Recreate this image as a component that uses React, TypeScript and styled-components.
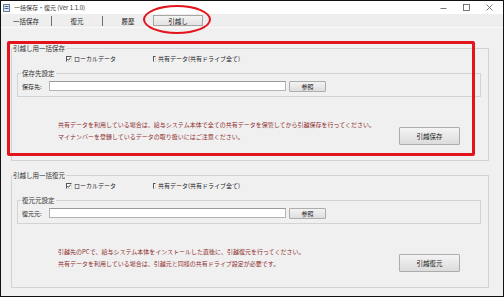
import React from 'react';
import styled, { createGlobalStyle } from 'styled-components';

// -- global --
const GlobalStyle = createGlobalStyle`
  html, body {
    margin: 0;
    padding: 0;
    background: #ffffff;
  }
  body {
    font-family: "Noto Sans CJK JP", "Noto Sans", sans-serif;
    font-size: 6px;
    color: #222222;
  }
  * {
    box-sizing: border-box;
  }
`;

// -- small drawings --
const AppIcon: React.FC = () => (
  <svg width="7" height="8" viewBox="0 0 7 8">
    <rect x="0.5" y="0.5" width="6" height="7" fill="#dfe6ee" stroke="#6b7f99" />
    <rect x="1.5" y="2" width="4" height="1" fill="#3d6fb0" />
    <rect x="1.5" y="4" width="4" height="1" fill="#3d6fb0" />
  </svg>
);

const MinimizeIcon: React.FC = () => (
  <svg width="7" height="7" viewBox="0 0 7 7">
    <line x1="0.5" y1="4.5" x2="6.5" y2="4.5" stroke="#555" strokeWidth="0.8" />
  </svg>
);

const MaximizeIcon: React.FC = () => (
  <svg width="7" height="7" viewBox="0 0 7 7">
    <rect x="0.5" y="0.5" width="6" height="6" fill="none" stroke="#555" strokeWidth="0.8" />
  </svg>
);

const CloseIcon: React.FC = () => (
  <svg width="7" height="7" viewBox="0 0 7 7">
    <path d="M0.5 0.5 L6.5 6.5 M6.5 0.5 L0.5 6.5" stroke="#555" strokeWidth="0.8" />
  </svg>
);

const CheckMark: React.FC = () => (
  <svg width="4" height="4" viewBox="0 0 4 4">
    <path d="M0.3 2 L1.5 3.3 L3.7 0.6" fill="none" stroke="#222" strokeWidth="0.9" />
  </svg>
);

// -- parts --
type CheckProps = { label: string; checked?: boolean };

const CheckField: React.FC<CheckProps> = ({ label, checked }) => (
  <CheckItem>
    <CheckBox>{checked && <CheckMark />}</CheckBox>
    <span>{label}</span>
  </CheckItem>
);

type SectionProps = {
  title: string;
  pathTitle: string;
  pathLabel: string;
  notes: string[];
  action: string;
  first?: boolean;
};

const MoveSection: React.FC<SectionProps> = ({ title, pathTitle, pathLabel, notes, action, first }) => (
  <GroupBox first={first}>
    <Legend left={0}>{title}</Legend>
    <CheckRow>
      <CheckField label="ローカルデータ" checked />
      <CheckField label="共有データ(共有ドライブ全て)" />
    </CheckRow>
    <InnerGroup>
      <Legend left={3}>{pathTitle}</Legend>
      <PathRow>
        <FieldLabel>{pathLabel}</FieldLabel>
        <TextInput />
        <SmallButton>参照</SmallButton>
      </PathRow>
    </InnerGroup>
    <NoteRow>
      <NoteText>
        {notes.map((n) => (
          <div key={n}>{n}</div>
        ))}
      </NoteText>
      <ActionButton>{action}</ActionButton>
    </NoteRow>
  </GroupBox>
);

// -- main component --
const App: React.FC = () => {
  const tabs = ['一括保存', '復元', '履歴'];

  return (
    <>
      <GlobalStyle />
      <Window>
        <TitleBar>
          <AppIcon />
          <TitleText>一括保存・復元 (Ver 1.1.0)</TitleText>
          <WindowControls>
            <ControlButton>
              <MinimizeIcon />
            </ControlButton>
            <ControlButton>
              <MaximizeIcon />
            </ControlButton>
            <ControlButton>
              <CloseIcon />
            </ControlButton>
          </WindowControls>
        </TitleBar>

        <TabBar>
          {tabs.map((t, i) => (
            <React.Fragment key={t}>
              {i > 0 && <TabSep />}
              <Tab>{t}</Tab>
            </React.Fragment>
          ))}
          <Tab selected>引越し</Tab>
        </TabBar>

        <Content>
          <MoveSection
            first
            title="引越し用一括保存"
            pathTitle="保存先設定"
            pathLabel="保存先:"
            notes={[
              '共有データを利用している場合は、給与システム本体で全ての共有データを保管してから引越保存を行ってください。',
              'マイナンバーを登録しているデータの取り扱いにはご注意ください。',
            ]}
            action="引越保存"
          />
          <MoveSection
            title="引越し用一括復元"
            pathTitle="復元元設定"
            pathLabel="復元元:"
            notes={[
              '引越先のPCで、給与システム本体をインストールした直後に、引越復元を行ってください。',
              '共有データを利用している場合は、引越元と同様の共有ドライブ設定が必要です。',
            ]}
            action="引越復元"
          />
        </Content>

        <TabMark />
        <AreaMark />
      </Window>
    </>
  );
};

// -- styled components --

const Window = styled.div`
  position: relative;
  width: 504px;
  height: 297px;
  border: 1px solid #111111;
  background: #f0f0f0;
  display: flex;
  flex-direction: column;
  overflow: hidden;
`;

const TitleBar = styled.div`
  height: 13px;
  background: #ffffff;
  display: flex;
  align-items: center;
  padding-left: 2px;
`;

const TitleText = styled.div`
  margin-left: 4px;
  font-size: 6px;
  line-height: 8px;
  color: #333333;
`;

const WindowControls = styled.div`
  margin-left: auto;
  display: flex;
  padding-right: 2px;
`;

const ControlButton = styled.div`
  width: 23px;
  height: 13px;
  display: flex;
  align-items: center;
  justify-content: center;
`;

const TabBar = styled.div`
  height: 14px;
  display: flex;
  align-items: center;
  background: #eeeeee;
  border-bottom: 1px solid #fafafa;
`;

const Tab = styled.div<{ selected?: boolean }>`
  width: 50px;
  height: 11px;
  display: flex;
  align-items: center;
  justify-content: center;
  font-size: 6.5px;
  color: #222222;
  border: 1px solid ${(p) => (p.selected ? '#a6a6a6' : 'transparent')};
  background: ${(p) => (p.selected ? 'linear-gradient(#f4f4f4, #e2e2e2)' : 'transparent')};
`;

const TabSep = styled.div`
  width: 1px;
  height: 10px;
  background: #6e6e6e;
`;

const Content = styled.div`
  flex: 1;
  padding: 0 14px 0 10px;
`;

const GroupBox = styled.div<{ first?: boolean }>`
  position: relative;
  margin-top: ${(p) => (p.first ? 20 : 14)}px;
  border: 1px solid #d3d3d3;
  padding: 6px 7px 15px 5px;
`;

const Legend = styled.div<{ left: number }>`
  position: absolute;
  top: -5px;
  left: ${(p) => p.left}px;
  padding: 0 1px;
  background: #f0f0f0;
  font-size: 6.5px;
  line-height: 9px;
  color: #333333;
`;

const CheckRow = styled.div`
  display: flex;
  align-items: center;
  height: 8px;
  margin-left: 49px;
`;

const CheckItem = styled.div`
  width: 87px;
  display: flex;
  align-items: center;
  gap: 2px;
  font-size: 6px;
  line-height: 8px;
  white-space: nowrap;
`;

const CheckBox = styled.div`
  width: 6px;
  height: 6px;
  background: #ffffff;
  border-top: 1px solid #555555;
  border-left: 1px solid #555555;
  border-right: 1px solid #dddddd;
  border-bottom: 1px solid #dddddd;
  display: flex;
  align-items: center;
  justify-content: center;
`;

const InnerGroup = styled.div`
  position: relative;
  margin-top: 10px;
  border: 1px solid #d3d3d3;
  padding: 7px 0 5px 4px;
`;

const PathRow = styled.div`
  display: flex;
  align-items: center;
  height: 10px;
`;

const FieldLabel = styled.div`
  width: 27px;
  font-size: 6px;
  white-space: nowrap;
`;

const TextInput = styled.div`
  width: 237px;
  height: 10px;
  background: #ffffff;
  border: 1px solid #b4b4b4;
  border-top-color: #9a9a9a;
`;

const SmallButton = styled.div`
  width: 37px;
  height: 11px;
  margin-left: 3px;
  display: flex;
  align-items: center;
  justify-content: center;
  font-size: 6px;
  border: 1px solid #adadad;
  border-radius: 1px;
  background: linear-gradient(#f3f3f3, #dedede);
`;

const NoteRow = styled.div`
  display: flex;
  align-items: flex-start;
  margin-top: 22px;
  padding-left: 41px;
`;

const NoteText = styled.div`
  flex: 1;
  font-size: 6px;
  line-height: 12px;
  color: #8e2e2e;
  white-space: nowrap;
`;

const ActionButton = styled.div`
  width: 61px;
  height: 18px;
  margin-top: 8px;
  margin-right: 21px;
  display: flex;
  align-items: center;
  justify-content: center;
  font-size: 6.5px;
  border: 1px solid #adadad;
  border-radius: 1px;
  background: linear-gradient(#f4f4f4, #dcdcdc);
`;

// -- red annotations over the screenshot --

const TabMark = styled.div`
  position: absolute;
  left: 142px;
  top: 4px;
  width: 68px;
  height: 29px;
  border: 2px solid #e3141b;
  border-radius: 50%;
  pointer-events: none;
`;

const AreaMark = styled.div`
  position: absolute;
  left: 6px;
  top: 40px;
  width: 468px;
  height: 115px;
  border: 3px solid #e3141b;
  border-radius: 2px;
  pointer-events: none;
`;

// -- finally export part --

export default App;
